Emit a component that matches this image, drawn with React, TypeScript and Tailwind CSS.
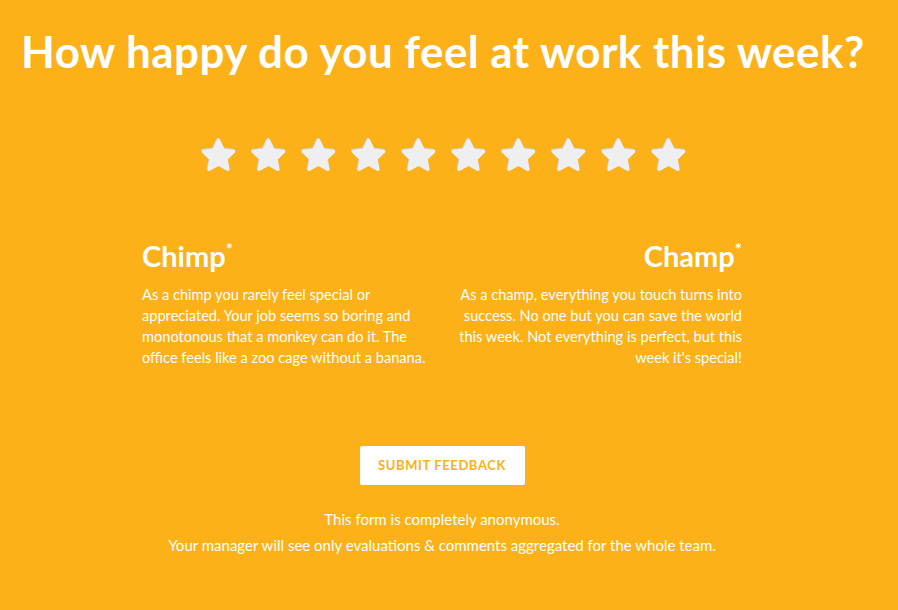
import React from 'react';

const STAR = 'M12 2.5l2.9 6.1 6.6.8-4.9 4.6 1.3 6.6L12 17.3l-5.9 3.3 1.3-6.6-4.9-4.6 6.6-.8z';

const Star: React.FC = () => (
  <svg width="38" height="38" viewBox="0 0 24 24" className="block">
    <path d={STAR} fill="#cfcfcf" stroke="#cfcfcf" strokeWidth="2.6" strokeLinejoin="round" />
    <path d={STAR} transform="translate(0.35 0.45)" fill="#efefef" stroke="#efefef" strokeWidth="2.2" strokeLinejoin="round" />
  </svg>
);

const chimp = [
  'As a chimp you rarely feel special or',
  'appreciated. Your job seems so boring and',
  'monotonous that a monkey can do it. The',
  'office feels like a zoo cage without a banana.',
];

const champ = [
  'As a champ, everything you touch turns into',
  'success. No one but you can save the world',
  'this week. Not everything is perfect, but this',
  "week it's special!",
];

export default function App() {
  return (
    <div className="w-[898px] h-[610px] bg-[#fbb117] text-white overflow-hidden" style={{ fontFamily: 'Lato, "Open Sans", sans-serif' }}>
      <div className="w-[884px] flex flex-col items-center">
        <h1 className="self-start pl-[21px] pt-[25px] text-[44px] leading-[52px] font-bold tracking-[0.45px]">
          How happy do you feel at work this week?
        </h1>

        <div className="mt-[59px] flex gap-[12px] ml-[1px]">
          {Array.from({ length: 10 }).map((_, i) => (
            <Star key={i} />
          ))}
        </div>

        <div className="mt-[65px] w-[600px] grid grid-cols-2 gap-[28px]">
          <div>
            <h2 className="text-[29px] leading-[34px] font-bold">Chimp<sup className="text-[17px] top-[-0.65em]">*</sup></h2>
            <p className="mt-[11px] text-[14.6px] leading-[21px] whitespace-nowrap">
              {chimp.map((l) => <span key={l} className="block">{l}</span>)}
            </p>
          </div>
          <div className="text-right">
            <h2 className="text-[29px] leading-[34px] font-bold">Champ<sup className="text-[17px] top-[-0.65em]">*</sup></h2>
            <p className="mt-[11px] text-[14.6px] leading-[21px] whitespace-nowrap">
              {champ.map((l) => <span key={l} className="block">{l}</span>)}
            </p>
          </div>
        </div>

        <button className="mt-[78px] w-[165px] h-[39px] bg-white rounded-[2px] text-[#fbb117] text-[13px] font-bold tracking-[0.6px]">
          SUBMIT FEEDBACK
        </button>

        <div className="mt-[21px] text-center text-[15px] leading-[26px]">
          <p>This form is completely anonymous.</p>
          <p>Your manager will see only evaluations &amp; comments aggregated for the whole team.</p>
        </div>
      </div>
    </div>
  );
}
